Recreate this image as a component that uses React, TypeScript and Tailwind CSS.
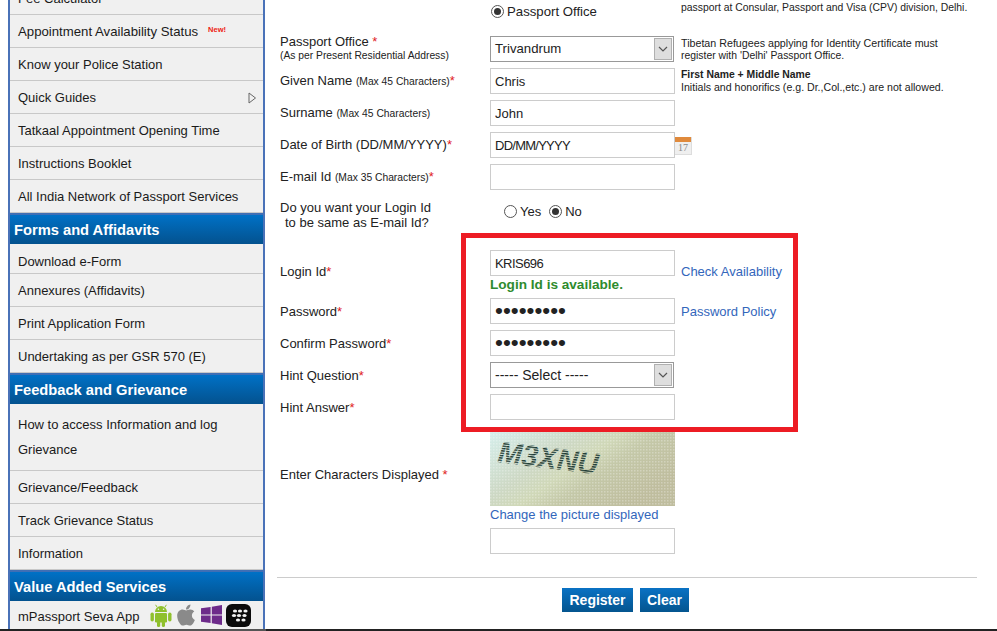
import { FaApple } from 'react-icons/fa';
import type { ReactNode } from 'react';

const Star = () => <span className="text-[#e01b24]">*</span>;
const Small = ({ children }: { children: ReactNode }) => <span className="text-[10.3px]">{children}</span>;

const MenuRow = ({ children, h = 'h-[33px] pt-[2px]' }: { children: ReactNode; h?: string }) => (
  <div className={`${h} flex items-center pl-2 pr-2 border-b border-[#c8c8c8] shrink-0 whitespace-nowrap`}>{children}</div>
);

const MenuHead = ({ children }: { children: ReactNode }) => (
  <div className="h-[31px] shrink-0 border-t-2 border-[#3f6fb5] bg-gradient-to-b from-[#0071c6] to-[#03528f] pl-[4px] pt-[5px] text-[14.7px] leading-[20px] font-bold text-white">
    {children}
  </div>
);

const TextBox = ({ value = '', type = 'text', track = '' }: { value?: string; type?: string; track?: string }) => (
  <input
    readOnly
    type={type}
    value={value}
    className={`w-[185px] h-[26px] block border border-[#cccccc] bg-white px-[4px] text-[#222] outline-none ${type === 'password' ? 'text-[22.5px]' : 'text-[13px]'} ${track}`}
  />
);

const SelectBox = ({ value, size = 'text-[13.2px]' }: { value: string; size?: string }) => (
  <div className={`w-[184px] h-[26px] flex border border-[#999] bg-white text-[#222] ${size}`}>
    <span className="flex-1 pl-[4px] leading-[24px]">{value}</span>
    <span className="w-[18px] my-px mr-px bg-[#dedede] border border-[#b0b0b0] flex items-center justify-center">
      <svg width="10" height="6" viewBox="0 0 10 6" fill="none" stroke="#555" strokeWidth="1.2">
        <path d="M1 1l4 4 4-4" />
      </svg>
    </span>
  </div>
);

const Radio = ({ on = false }: { on?: boolean }) => (
  <span className="w-[13px] h-[13px] rounded-full border border-[#555] bg-white flex items-center justify-center shrink-0">
    {on && <span className="w-[7px] h-[7px] rounded-full bg-[#333]" />}
  </span>
);

const FormRow = ({ label, field, side, raise = false }: { label?: ReactNode; field: ReactNode; side?: ReactNode; raise?: boolean }) => (
  <div className="grid grid-cols-[210px_185px_1fr] h-[26px] mb-[6px]">
    <div className={`flex items-center ${raise ? '' : 'pt-[2px]'}`}>{label}</div>
    <div>{field}</div>
    <div className="pl-[6px]">{side}</div>
  </div>
);

const Note = ({ children, lead = 'leading-[13px]' }: { children: ReactNode; lead?: string }) => (
  <div className={`text-[10.4px] text-[#222] whitespace-nowrap ${lead}`}>{children}</div>
);

const Calendar = () => (
  <div className="w-[17px] h-[18px] mt-[5px] -ml-[6px] bg-[#efefef] border-b border-r border-[#ddd]">
    <div className="h-[5px] bg-[#e08a3c]" />
    <div className="text-center font-['Liberation_Serif'] text-[10px] leading-[12px] text-[#888]">17</div>
  </div>
);

const AndroidIcon = () => (
  <svg width="22" height="23" viewBox="0 0 22 23" fill="#8fc02c" stroke="none">
    <path d="M5 8a6 6 0 0 1 12 0z" />
    <path d="M7 3L5.6 0.8M15 3l1.4-2.2" stroke="#8fc02c" strokeWidth="1" />
    <rect x="5" y="9" width="12" height="9.5" rx="1.2" />
    <rect x="0.5" y="8.5" width="3.4" height="9" rx="1.7" />
    <rect x="18.1" y="8.5" width="3.4" height="9" rx="1.7" />
    <rect x="7" y="17" width="3.2" height="6" rx="1.6" />
    <rect x="11.8" y="17" width="3.2" height="6" rx="1.6" />
    <circle cx="8.4" cy="5.2" r="0.8" fill="#f0f0f0" />
    <circle cx="13.6" cy="5.2" r="0.8" fill="#f0f0f0" />
  </svg>
);

const WindowsTile = () => (
  <svg width="21" height="20" viewBox="0 0 21 20" fill="#6d2b8a">
    <path d="M0 3.2L9.6 2v7.4H0z" />
    <path d="M10.8 1.8L21 0v9.4H10.8z" />
    <path d="M0 10.6h9.6V18L0 16.8z" />
    <path d="M10.8 10.6H21V20l-10.2-1.8z" />
  </svg>
);

const BlackberryIcon = () => (
  <svg width="25" height="23" viewBox="0 0 25 23">
    <rect width="25" height="23" rx="6" fill="#0b0b0b" />
    <g fill="#f2f2f2">
      <ellipse cx="9" cy="7" rx="2.1" ry="1.5" />
      <ellipse cx="14" cy="7" rx="2.1" ry="1.5" />
      <ellipse cx="19.5" cy="7" rx="2.1" ry="1.5" />
      <ellipse cx="8" cy="11.5" rx="2.1" ry="1.5" />
      <ellipse cx="13" cy="11.5" rx="2.1" ry="1.5" />
      <ellipse cx="18.5" cy="11.5" rx="2.1" ry="1.5" />
      <ellipse cx="12" cy="16" rx="2.1" ry="1.5" />
      <ellipse cx="17.5" cy="16" rx="2.1" ry="1.5" />
    </g>
  </svg>
);

const Captcha = () => (
  <svg width="185" height="78" viewBox="0 0 185 78" className="block">
    <defs>
      <linearGradient id="capbg" x1="0" y1="0" x2="1" y2="0.6">
        <stop offset="0" stopColor="#d6f0ee" />
        <stop offset="0.4" stopColor="#cdd8c4" />
        <stop offset="0.55" stopColor="#d0d8b8" />
        <stop offset="0.7" stopColor="#c4c8a8" />
        <stop offset="1" stopColor="#bfbd9e" />
      </linearGradient>
      <pattern id="capdots" width="3" height="3" patternUnits="userSpaceOnUse">
        <rect width="1.5" height="1.5" fill="#ffffff" opacity="0.28" />
      </pattern>
      <pattern id="capstripes" width="2" height="2.4" patternUnits="userSpaceOnUse">
        <rect width="2" height="1.4" fill="#1f3a34" />
      </pattern>
    </defs>
    <rect width="185" height="78" fill="url(#capbg)" />
    <rect width="185" height="78" fill="url(#capdots)" />
    <text
      x="7"
      y="34"
      transform="rotate(7 7 34)"
      fontFamily="Liberation Sans, sans-serif"
      fontSize="30"
      fontWeight="700"
      fontStyle="italic"
      textLength="101"
      lengthAdjust="spacingAndGlyphs"
      fill="url(#capstripes)"
    >
      M3XNU
    </text>
  </svg>
);

export default function App() {
  return (
    <div className="relative w-[997px] h-[631px] overflow-hidden bg-white flex flex-col font-['Liberation_Sans',Arial,sans-serif] text-[13px] text-[#222]">
      <div className="flex flex-1 min-h-0">
        {/* left menu */}
        <div className="ml-2 w-[257px] -mt-[18px] shrink-0 self-start flex flex-col bg-[#f0f0f0] border-x-2 border-[#4a72b8] text-[13px] text-[#1a1a1a]">
          <MenuRow>Fee Calculator</MenuRow>
          <MenuRow>
            <span className="text-[13.2px]">Appointment Availability Status</span>
            <span className="ml-[10px] -mt-[5px] text-[7.5px] font-bold text-[#ee2211]">New!</span>
          </MenuRow>
          <MenuRow>Know your Police Station</MenuRow>
          <MenuRow>
            <span className="flex-1">Quick Guides</span>
            <svg width="9" height="12" viewBox="0 0 9 12" fill="none" stroke="#666" className="-mr-[2px]">
              <path d="M1 1l6.5 5L1 11z" />
            </svg>
          </MenuRow>
          <MenuRow>Tatkaal Appointment Opening Time</MenuRow>
          <MenuRow>Instructions Booklet</MenuRow>
          <MenuRow>All India Network of Passport Services</MenuRow>

          <MenuHead>Forms and Affidavits</MenuHead>
          <MenuRow h="h-[30px] pt-[6px]">Download e-Form</MenuRow>
          <MenuRow>Annexures (Affidavits)</MenuRow>
          <MenuRow>Print Application Form</MenuRow>
          <MenuRow>Undertaking as per GSR 570 (E)</MenuRow>

          <MenuHead>Feedback and Grievance</MenuHead>
          <div className="h-[67px] shrink-0 pl-2 pt-[8px] leading-[25px] border-b border-[#c8c8c8]">
            How to access Information and log
            <br />
            Grievance
          </div>
          <MenuRow>Grievance/Feedback</MenuRow>
          <MenuRow>Track Grievance Status</MenuRow>
          <MenuRow>Information</MenuRow>

          <MenuHead>Value Added Services</MenuHead>
          <div className="h-[29px] shrink-0 flex items-center pl-2 pb-px">
            <span className="w-[132px] pt-[4px]">mPassport Seva App</span>
            <AndroidIcon />
            <FaApple className="ml-[2px] w-[24px] h-[24px] text-[#8a8a8a]" />
            <span className="ml-[3px]">
              <WindowsTile />
            </span>
            <span className="ml-[4px]">
              <BlackberryIcon />
            </span>
          </div>
        </div>

        {/* form */}
        <div className="ml-[15px] flex-1 min-w-0">
          <div className="grid grid-cols-[210px_185px_1fr] h-[36px]">
            <div />
            <div className="flex items-center gap-[3px] h-[22px] pl-px text-[13.2px]">
              <Radio on />
              <span className="pt-[2px]">Passport Office</span>
            </div>
            <div className="pl-[6px] pt-px">
              <Note>passport at Consular, Passport and Visa (CPV) division, Delhi.</Note>
            </div>
          </div>

          <FormRow
            raise
            label={
              <div className="self-start -mt-[1px] leading-[14px]">
                Passport Office <Star />
                <div className="mt-px text-[10.3px] leading-[12px]">(As per Present Residential Address)</div>
              </div>
            }
            field={<SelectBox value="Trivandrum" />}
            side={
              <div className="pt-[1px]">
                <Note lead="leading-[12px]">
                  <span className="text-[10.7px]">Tibetan Refugees applying for Identity Certificate must</span>
                </Note>
                <Note lead="leading-[12px]">register with 'Delhi' Passport Office.</Note>
              </div>
            }
          />
          <FormRow
            raise
            label={
              <span>
                Given Name <Small>(Max 45 Characters)</Small>
                <Star />
              </span>
            }
            field={<TextBox value="Chris" />}
            side={
              <Note>
                <b>First Name + Middle Name</b>
                <br />
                <span className="text-[10.6px]">Initials and honorifics (e.g. Dr.,Col.,etc.) are not allowed.</span>
              </Note>
            }
          />
          <FormRow
            raise
            label={
              <span>
                Surname <Small>(Max 45 Characters)</Small>
              </span>
            }
            field={<TextBox value="John" />}
          />
          <FormRow
            raise
            label={
              <span>
                Date of Birth (DD/MM/YYYY)
                <Star />
              </span>
            }
            field={<TextBox value="DD/MM/YYYY" track="tracking-[-0.75px]" />}
            side={<Calendar />}
          />
          <FormRow
            raise
            label={
              <span>
                E-mail Id <Small>(Max 35 Characters)</Small>
                <Star />
              </span>
            }
            field={<TextBox />}
          />

          <div className="grid grid-cols-[210px_185px] h-[54px] pt-[4px]">
            <div className="leading-[15px]">
              Do you want your Login Id
              <br />
              <span className="pl-[5px]">to be same as E-mail Id?</span>
            </div>
            <div className="flex items-center h-[22px] pl-[14px]">
              <Radio />
              <span className="ml-[3px] pt-[2px]">Yes</span>
              <span className="ml-[8px]">
                <Radio on />
              </span>
              <span className="ml-[3px] pt-[2px]">No</span>
            </div>
          </div>

          <div className="grid grid-cols-[210px_185px_1fr] h-[48px]">
            <div className="pt-[12px]">Login Id<Star /></div>
            <div>
              <TextBox value="KRIS696" track="tracking-[-0.55px]" />
              <div className="font-bold text-[13.6px] text-[#2e8b2e] leading-[18px]">Login Id is available.</div>
            </div>
            <div className="pl-[6px] pt-[12px] text-[#3366bb]">Check Availability</div>
          </div>
          <FormRow
            label={<span>Password<Star /></span>}
            field={<TextBox type="password" value="abcdefghi" />}
            side={<div className="pt-[4px] text-[#3366bb]">Password Policy</div>}
          />
          <FormRow label={<span>Confirm Password<Star /></span>} field={<TextBox type="password" value="abcdefghi" />} />
          <FormRow label={<span>Hint Question<Star /></span>} field={<SelectBox value="----- Select -----" size="text-[14px]" />} />
          <FormRow label={<span>Hint Answer<Star /></span>} field={<TextBox />} />

          <div className="grid grid-cols-[210px_185px] mt-[8px]">
            <div className="pt-[37px]">Enter Characters Displayed <Star /></div>
            <div>
              <Captcha />
              <div className="h-[22px] leading-[17px] text-[#3366bb] whitespace-nowrap">Change the picture displayed</div>
              <TextBox />
            </div>
          </div>

          <div className="-ml-[3px] w-[700px] mt-[23px] border-t border-[#cccccc]" />
          <div className="-ml-[3px] w-[700px] mt-[10px] flex justify-center gap-[7px] pr-[3px] font-bold text-[14px] text-white">
            <div className="w-[71px] h-[24px] leading-[24px] text-center bg-gradient-to-b from-[#0a72c4] to-[#04558f]">Register</div>
            <div className="w-[49px] h-[24px] leading-[24px] text-center bg-gradient-to-b from-[#0a72c4] to-[#04558f]">Clear</div>
          </div>
        </div>
      </div>

      {/* window strip at the bottom */}
      <div className="h-[2px] shrink-0 flex bg-[#222]">
        <div className="ml-[130px] w-[136px] bg-[#555]" />
      </div>

      {/* red highlight drawn over the form */}
      <div className="absolute left-[461px] top-[233px] w-[337px] h-[199px] border-[5px] border-[#ed1c24]" />
    </div>
  );
}
